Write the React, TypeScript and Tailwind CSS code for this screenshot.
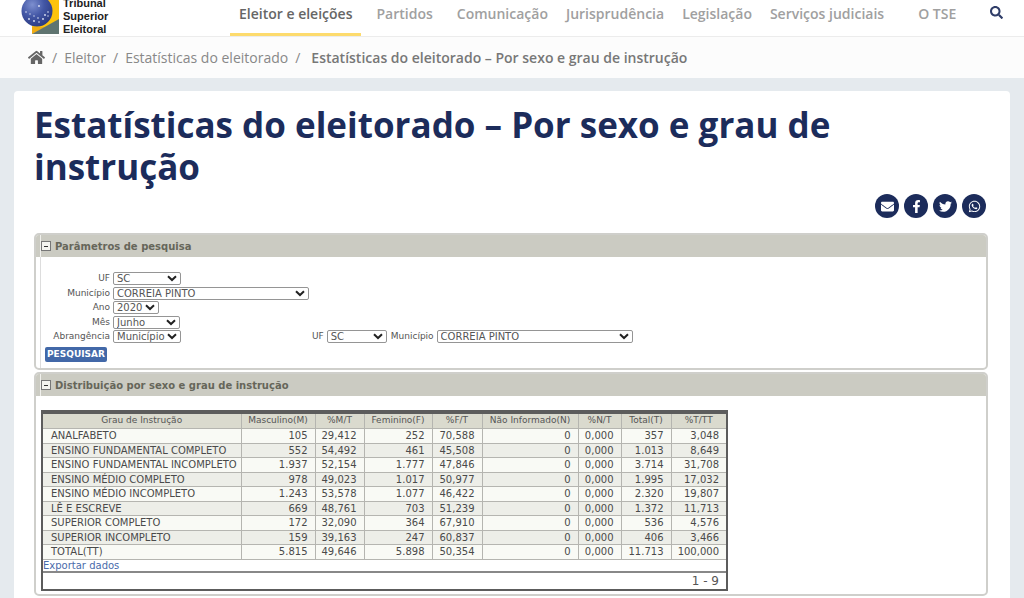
import type { ReactNode } from 'react'
import { FaEnvelope, FaFacebookF, FaHome, FaSearch, FaTwitter, FaWhatsapp } from 'react-icons/fa'

const navItems = [
  { label: 'Eleitor e eleições', active: true, className: '' },
  { label: 'Partidos', className: 'ml-[6px]' },
  { label: 'Comunicação', className: 'ml-[6px]' },
  { label: 'Jurisprudência', className: '' },
  { label: 'Legislação', className: '' },
  { label: 'Serviços judiciais', className: '' },
  { label: 'O TSE', className: 'ml-4' },
]

const shareItems = [
  { label: 'E-mail', icon: FaEnvelope },
  { label: 'Facebook', icon: FaFacebookF },
  { label: 'Twitter', icon: FaTwitter },
  { label: 'WhatsApp', icon: FaWhatsapp },
]

const columns = [
  { label: 'Grau de Instrução', width: 'w-[198px]' },
  { label: 'Masculino(M)', width: 'w-[74px]' },
  { label: '%M/T', width: 'w-[49px]' },
  { label: 'Feminino(F)', width: 'w-[68px]' },
  { label: '%F/T', width: 'w-[50px]' },
  { label: 'Não Informado(N)', width: 'w-[96px]' },
  { label: '%N/T', width: 'w-[43px]' },
  { label: 'Total(T)', width: 'w-[50px]' },
  { label: '%T/TT', width: 'w-[55px]' },
]

const rows = [
  ['ANALFABETO', '105', '29,412', '252', '70,588', '0', '0,000', '357', '3,048'],
  ['ENSINO FUNDAMENTAL COMPLETO', '552', '54,492', '461', '45,508', '0', '0,000', '1.013', '8,649'],
  ['ENSINO FUNDAMENTAL INCOMPLETO', '1.937', '52,154', '1.777', '47,846', '0', '0,000', '3.714', '31,708'],
  ['ENSINO MÉDIO COMPLETO', '978', '49,023', '1.017', '50,977', '0', '0,000', '1.995', '17,032'],
  ['ENSINO MÉDIO INCOMPLETO', '1.243', '53,578', '1.077', '46,422', '0', '0,000', '2.320', '19,807'],
  ['LÊ E ESCREVE', '669', '48,761', '703', '51,239', '0', '0,000', '1.372', '11,713'],
  ['SUPERIOR COMPLETO', '172', '32,090', '364', '67,910', '0', '0,000', '536', '4,576'],
  ['SUPERIOR INCOMPLETO', '159', '39,163', '247', '60,837', '0', '0,000', '406', '3,466'],
  ['TOTAL(TT)', '5.815', '49,646', '5.898', '50,354', '0', '0,000', '11.713', '100,000'],
]

function Logo() {
  return (
    <a href="#" className="flex items-end gap-1 text-[#222]">
      <svg width="38" height="36" viewBox="0 0 38 36" aria-hidden="true">
        <defs>
          <radialGradient id="globe" cx="0.35" cy="0.3" r="0.75">
            <stop offset="0" stopColor="#7d8fcf" />
            <stop offset="0.5" stopColor="#4357a6" />
            <stop offset="1" stopColor="#2b3a80" />
          </radialGradient>
        </defs>
        <path d="M11 0H38V20L11 34Z" fill="#fdc30c" />
        <path d="M11 27H25L11 34Z" fill="#f0ac12" />
        <path d="M11 34L38 19V34Z" fill="#5f7470" />
        <circle cx="16" cy="11" r="15.5" fill="url(#globe)" />
        <g fill="#dfe5f5">
          <circle cx="18" cy="6" r="0.9" />
          <circle cx="5" cy="12" r="0.8" />
          <circle cx="9" cy="14" r="0.7" />
          <circle cx="8" cy="19" r="0.9" />
          <circle cx="13" cy="16" r="0.7" />
          <circle cx="13" cy="21" r="0.9" />
          <circle cx="17" cy="18" r="0.8" />
          <circle cx="18" cy="22" r="0.8" />
          <circle cx="22" cy="19" r="0.9" />
          <circle cx="24" cy="15" r="0.9" />
          <circle cx="27" cy="16" r="0.7" />
          <circle cx="27" cy="12" r="0.8" />
        </g>
      </svg>
      <span className="font-['Liberation_Sans',sans-serif] text-[11px] leading-[13px] font-bold">
        Tribunal
        <br />
        Superior
        <br />
        Eleitoral
      </span>
    </a>
  )
}

function Panel({ title, children }: { title: string; children: ReactNode }) {
  return (
    <section className="overflow-hidden rounded-[5px] border-2 border-[#cfcfcb] bg-white">
      <div className="bg-[#cbcbc2] pl-1">
        <h2 className="flex h-[22px] items-center gap-1 border-l border-[#f0f0ec] text-[10px] font-bold text-[#66665a]">
          <button
            aria-label="Recolher"
            className="flex h-[10px] w-[10px] items-center justify-center border border-[#777] bg-[#f4f4f0]"
          >
            <span className="h-px w-1 bg-[#333]" />
          </button>
          {title}
        </h2>
      </div>
      {children}
    </section>
  )
}

interface SelectProps {
  id: string
  label: string
  value: string
  labelWidth?: string
  width: string
}

function Select({ id, label, value, labelWidth = '', width }: SelectProps) {
  return (
    <div className="flex items-center gap-[3px]">
      <label htmlFor={id} className={`text-right leading-[13px] ${labelWidth}`}>
        {label}
      </label>
      <div className={`relative ${width}`}>
        <select
          id={id}
          className="block h-[13px] w-full appearance-none rounded-[2px] border border-[#959595] bg-white pl-[3px] text-[10px] leading-[11px] text-[#555]"
        >
          <option>{value}</option>
        </select>
        <svg
          className="pointer-events-none absolute top-[3px] right-1"
          width="10"
          height="7"
          viewBox="0 0 10 7"
          fill="none"
          stroke="#222"
          strokeWidth="2"
        >
          <path d="M1 1.2L5 5L9 1.2" />
        </svg>
      </div>
    </div>
  )
}

export default function App() {
  return (
    <div className="flex min-h-screen flex-col bg-[#e5eaee] font-['Open_Sans',sans-serif]">
      {/* Header */}
      <header className="flex h-[37px] items-end border-b border-[#ececec] bg-white pl-[21px]">
        <div className="flex h-9 w-[209px] shrink-0 items-end">
          <Logo />
        </div>
        <nav className="flex h-full flex-1 text-[14px] font-semibold whitespace-nowrap text-[#a0a0a0]">
          {navItems.map((item) => (
            <a
              key={item.label}
              href="#"
              className={`h-9 border-b-[3px] px-[9px] pt-1 leading-5 ${item.className} ${
                item.active ? 'border-[#fddb6d] text-[#666]' : 'border-transparent'
              }`}
            >
              {item.label}
            </a>
          ))}
        </nav>
        <button aria-label="Buscar" className="mr-[21px] h-full pb-3 text-[#2f3d68]">
          <FaSearch size={13} />
        </button>
      </header>

      {/* Breadcrumb */}
      <nav className="flex h-[41px] items-center gap-[7px] bg-[#fcfcfc] pl-7 text-[14px] whitespace-nowrap text-[#888]">
        <a href="#" aria-label="Início" className="text-[#666]">
          <FaHome size={17} />
        </a>
        <span>/</span>
        <a href="#">Eleitor</a>
        <span>/</span>
        <a href="#">Estatísticas do eleitorado</a>
        <span>/</span>
        <span className="ml-1 font-semibold text-[#777]">
          Estatísticas do eleitorado – Por sexo e grau de instrução
        </span>
      </nav>

      <main className="mx-[14px] mt-[13px] flex-1 rounded-t-[4px] bg-white px-5 pt-[13px] pb-[3px]">
        <h1 className="text-[35px] leading-[42px] font-bold text-[#1c2c5b]">
          Estatísticas do eleitorado – Por sexo e grau de instrução
        </h1>

        {/* Share */}
        <div className="mt-[6px] mb-[15px] flex justify-end gap-[5px] pr-1">
          {shareItems.map((item) => {
            const Icon = item.icon
            return (
              <a
                key={item.label}
                href="#"
                aria-label={item.label}
                className="flex h-6 w-6 items-center justify-center rounded-full bg-[#1c2c5b] text-white"
              >
                <Icon size={13} />
              </a>
            )
          })}
        </div>

        <div className="flex flex-col gap-[2px] pr-[2px] font-['DejaVu_Sans',Verdana,sans-serif] text-[9px] text-[#555]">
          <Panel title="Parâmetros de pesquisa">
            <form className="ml-1 border-l border-[#ddd] pt-[15px] pb-[6px]">
              <Select id="uf" label="UF" value="SC" labelWidth="w-[69px]" width="w-[68px]" />
              <div className="mt-[2px]">
                <Select id="municipio" label="Município" value="CORREIA PINTO" labelWidth="w-[69px]" width="w-[196px]" />
              </div>
              <div className="mt-px">
                <Select id="ano" label="Ano" value="2020" labelWidth="w-[69px]" width="w-[46px]" />
              </div>
              <div className="mt-[2px]">
                <Select id="mes" label="Mês" value="Junho" labelWidth="w-[69px]" width="w-[67px]" />
              </div>
              <div className="mt-px flex">
                <div className="w-[271px]">
                  <Select id="abrangencia" label="Abrangência" value="Município" labelWidth="w-[69px]" width="w-[68px]" />
                </div>
                <div className="flex gap-1">
                  <Select id="uf-abrangencia" label="UF" value="SC" width="w-[60px]" />
                  <Select id="municipio-abrangencia" label="Município" value="CORREIA PINTO" width="w-[196px]" />
                </div>
              </div>
              <button
                type="button"
                className="mt-1 ml-1 block h-[15px] rounded-[2px] bg-[#4268a8] px-[2px] text-[9px] leading-[15px] font-bold text-white"
              >
                PESQUISAR
              </button>
            </form>
          </Panel>

          <Panel title="Distribuição por sexo e grau de instrução">
            <div className="pt-[14px] pb-[3px] pl-[5px]">
              <div className="w-[687px] border-2 border-t-4 border-[#5c5c5c]">
                <table className="w-full table-fixed border-collapse whitespace-nowrap">
                  <thead>
                    <tr className="h-[14px] bg-[#dadace]">
                      {columns.map((column) => (
                        <th
                          key={column.label}
                          className={`border-r border-b border-[#b5b5b0] p-0 leading-[13px] font-normal last:border-r-0 ${column.width}`}
                        >
                          {column.label}
                        </th>
                      ))}
                    </tr>
                  </thead>
                  <tbody className="text-[10px] text-[#4a4a4a]">
                    {rows.map((row) => (
                      <tr key={row[0]} className="odd:h-[15px] odd:bg-[#f9faf5] even:h-[14px] even:bg-[#edeee8]">
                        {row.map((cell, i) => (
                          <td
                            key={i}
                            className="border-r border-b border-[#b5b5b0] py-0 pr-[7px] text-right leading-[13px] first:pr-0 first:pl-2 first:text-left last:border-r-0"
                          >
                            {cell}
                          </td>
                        ))}
                      </tr>
                    ))}
                  </tbody>
                </table>
                <a href="#" className="block h-[11px] text-[10px] leading-[11px] text-[#4a6bab]">
                  Exportar dados
                </a>
                <div className="border-t-2 border-[#888] pr-[7px] text-right text-[12px] leading-4">1 - 9</div>
              </div>
            </div>
          </Panel>
        </div>
      </main>
    </div>
  )
}
